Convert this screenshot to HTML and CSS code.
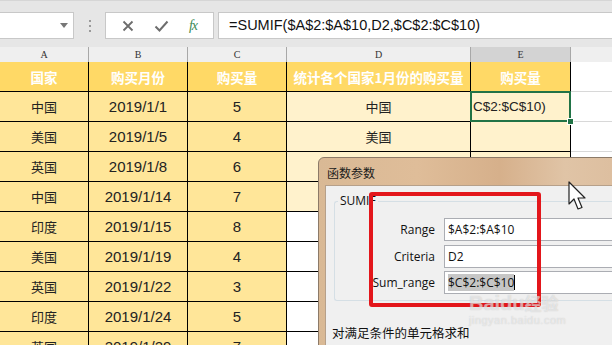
FILE: index.html
```html
<!DOCTYPE html>
<html lang="zh-CN">
<head>
    <meta charset="UTF-8">
    <meta name="viewport" content="width=device-width, initial-scale=1.0">
    <title>SUMIF 函数参数</title>
    <link rel="stylesheet" href="styles.css">
</head>
<body>
<div class="page">
    <!-- 编辑栏 -->
    <div class="toolbar">
        <div class="namebox">
            <svg width="8" height="5" viewBox="0 0 8 5"><path d="M0 0H8L4 5Z" fill="#777"/></svg>
        </div>
        <div class="grip"><i></i><i></i><i></i></div>
        <div class="btnbox">
            <svg width="12" height="12" viewBox="0 0 12 12"><path d="M1.5 1.5L10.5 10.5M10.5 1.5L1.5 10.5" stroke="#6d6d6d" stroke-width="1.8"/></svg>
            <svg width="15" height="12" viewBox="0 0 15 12"><path d="M1.5 6.5L5.5 10.5L13.5 1.5" stroke="#6d6d6d" stroke-width="2" fill="none"/></svg>
            <span class="fx">fx</span>
        </div>
        <div class="formula">=SUMIF($A$2:$A$10,D2,$C$2:$C$10)</div>
    </div>

    <!-- 工作表 -->
    <div class="sheet">
        <div class="colheads">
            <div>A</div><div>B</div><div>C</div><div>D</div><div class="sel">E</div><div class="rest"></div>
        </div>
        <div class="row head">
            <div class="cell">国家</div>
            <div class="cell">购买月份</div>
            <div class="cell">购买量</div>
            <div class="cell">统计各个国家1月份的购买量</div>
            <div class="cell">购买量</div>
            <div class="cell grid"></div>
        </div>
        <div class="row">
            <div class="cell cn">中国</div><div class="cell num">2019/1/1</div><div class="cell num">5</div>
            <div class="cell cn pale">中国</div><div class="cell pale active">C$2:$C$10)</div><div class="cell grid"></div>
        </div>
        <div class="row">
            <div class="cell cn">美国</div><div class="cell num">2019/1/5</div><div class="cell num">4</div>
            <div class="cell cn pale">美国</div><div class="cell pale"></div><div class="cell grid"></div>
        </div>
        <div class="row">
            <div class="cell cn">英国</div><div class="cell num">2019/1/8</div><div class="cell num">6</div>
            <div class="cell cn pale">英国</div><div class="cell pale"></div><div class="cell grid"></div>
        </div>
        <div class="row">
            <div class="cell cn">中国</div><div class="cell num">2019/1/14</div><div class="cell num">7</div>
            <div class="cell cn pale">印度</div><div class="cell pale"></div><div class="cell grid"></div>
        </div>
        <div class="row">
            <div class="cell cn">印度</div><div class="cell num">2019/1/15</div><div class="cell num">8</div>
            <div class="cell blank"></div><div class="cell blank"></div><div class="cell grid"></div>
        </div>
        <div class="row">
            <div class="cell cn">美国</div><div class="cell num">2019/1/19</div><div class="cell num">4</div>
            <div class="cell blank"></div><div class="cell blank"></div><div class="cell grid"></div>
        </div>
        <div class="row">
            <div class="cell cn">英国</div><div class="cell num">2019/1/22</div><div class="cell num">3</div>
            <div class="cell blank"></div><div class="cell blank"></div><div class="cell grid"></div>
        </div>
        <div class="row">
            <div class="cell cn">印度</div><div class="cell num">2019/1/24</div><div class="cell num">5</div>
            <div class="cell blank"></div><div class="cell blank"></div><div class="cell grid"></div>
        </div>
        <div class="row">
            <div class="cell cn">英国</div><div class="cell num">2019/1/29</div><div class="cell num">7</div>
            <div class="cell blank"></div><div class="cell blank"></div><div class="cell grid"></div>
        </div>
    </div>

    <!-- 函数参数对话框 -->
    <div class="dialog">
        <div class="titlebar">函数参数</div>
        <div class="client">
            <div class="group">
                <span class="legend">SUMIF</span>
                <div class="fields">
                    <label>Range</label><div class="input">$A$2:$A$10</div>
                    <label>Criteria</label><div class="input">D2</div>
                    <label>Sum_range</label><div class="input"><span class="selected">$C$2:$C$10</span><span class="caret"></span></div>
                </div>
            </div>
            <p class="desc">对满足条件的单元格求和</p>
        </div>
    </div>

    <div class="mark"></div>

    <div class="watermark">
        <div class="wm-big">Baidu<span>经验</span></div>
        <div class="wm-small">jingyan.baidu.com</div>
    </div>

    <svg class="cursor" width="20" height="30" viewBox="0 0 20 30">
        <path d="M1 1V23L6 18L10 28L14 26.5L10 17H17Z" fill="#fff" stroke="#222" stroke-width="1.2" stroke-linejoin="round"/>
    </svg>
</div>
</body>
</html>
```

FILE: styles.css
```css
body {
    margin: 0;
    font-family: "Liberation Sans", Arial, sans-serif;
    background: #fff;
}
.page {
    position: relative;
    width: 612px;
    height: 345px;
    overflow: hidden;
}

/* 编辑栏 */
.toolbar {
    height: 47px;
    box-sizing: border-box;
    padding-top: 11px;
    background: #e6e6e6;
    border-top: 1px solid #d6d6d6;
    display: flex;
    align-items: flex-start;
}
.namebox {
    width: 74px;
    height: 27px;
    box-sizing: border-box;
    background: #fff;
    border: 1px solid #c8c8c8;
    border-left: none;
    display: flex;
    align-items: center;
    justify-content: flex-end;
    padding-right: 5px;
}
.grip {
    width: 31px;
    height: 27px;
    display: flex;
    flex-direction: column;
    align-items: center;
    justify-content: center;
    gap: 3px;
}
.grip i {
    width: 2px;
    height: 2px;
    background: #9a9a9a;
}
.btnbox {
    width: 109px;
    height: 27px;
    box-sizing: border-box;
    background: #fff;
    border: 1px solid #c8c8c8;
    display: flex;
    align-items: center;
    justify-content: space-around;
    padding: 0 6px;
}
.fx {
    font-family: "Liberation Serif", serif;
    font-style: italic;
    font-size: 14px;
    color: #3b8a55;
    letter-spacing: -1px;
}
.formula {
    flex: 1;
    margin-left: 4px;
    height: 27px;
    box-sizing: border-box;
    background: #fff;
    border: 1px solid #c8c8c8;
    border-right: none;
    padding-left: 10px;
    font-size: 14.5px;
    line-height: 25px;
    color: #111;
    white-space: nowrap;
}

/* 工作表 */
.colheads,
.row {
    display: grid;
    grid-template-columns: 89px 99px 99px 184px 100px 1fr;
}
.colheads {
    height: 15px;
    background: #efefef;
    font-family: "Liberation Serif", serif;
    font-size: 10px;
    color: #333;
}
.colheads div {
    box-sizing: border-box;
    border-right: 1px solid #a8a8a8;
    border-bottom: 1px solid #b8b8b8;
    text-align: center;
    line-height: 15px;
}
.colheads .sel {
    background: #d3d3d3;
    border-bottom: 2px solid #217346;
}
.colheads .rest {
    border-right: none;
}
.row {
    height: 30px;
}
.cell {
    box-sizing: border-box;
    border-right: 1px solid #000;
    border-bottom: 1px solid #000;
    background: #ffe699;
    display: flex;
    align-items: center;
    justify-content: center;
    font-size: 15px;
    color: #222;
    white-space: nowrap;
}
.cn {
    font-family: "Noto Sans CJK SC", sans-serif;
    font-size: 13px;
}
.head .cell {
    background: #ffd966;
    color: #fff;
    font-family: "Noto Sans CJK SC", sans-serif;
    font-weight: bold;
    font-size: 13.5px;
}
.head .cell.grid {
    background: #fff;
}
.cell.pale {
    background: #fff2cc;
}
.cell.blank {
    background: #fff;
}
.cell.grid {
    background: #fff;
    border-right: none;
    border-bottom: 1px solid #d8d8d8;
}
.cell.active {
    position: relative;
    justify-content: flex-start;
    padding-left: 3px;
    font-size: 13.5px;
    box-shadow: inset 0 0 0 2px #217346;
    margin: -1px 0 0 -1px;
    width: 101px;
    height: 31px;
    border: none;
}
.cell.active::after {
    content: "";
    position: absolute;
    right: -3px;
    bottom: -3px;
    width: 5px;
    height: 5px;
    background: #217346;
    border: 1px solid #fff;
}

/* 对话框 */
.dialog {
    position: absolute;
    left: 318px;
    top: 157px;
    width: 330px;
    height: 200px;
    border-radius: 6px 0 0 0;
    background: linear-gradient(90deg, #d9b995, #dfbd99 30%, #d6b08b 55%, #e0c4a6 75%, #dbbb9b);
    border: 1px solid #8c7a68;
    box-sizing: border-box;
    padding-left: 6px;
}
.titlebar {
    height: 27px;
    padding-left: 2px;
    font-family: "Noto Sans CJK SC", sans-serif;
    font-size: 12px;
    line-height: 29px;
    color: #1a1a1a;
}
.client {
    background: #f0f0f0;
    height: 100%;
    border-top: 1px solid #b6a08a;
    border-left: 1px solid #b6a08a;
    padding: 15px 0 0 8px;
    box-sizing: border-box;
}
.group {
    position: relative;
    height: 100px;
    box-sizing: border-box;
    border: 1px solid #d5dfe5;
    border-right: none;
    border-radius: 3px 0 0 3px;
    font-family: "Open Sans", sans-serif;
    font-size: 12px;
    color: #111;
}
.legend {
    position: absolute;
    left: 3px;
    top: -9px;
    padding: 0 2px;
    background: #f0f0f0;
    line-height: 16px;
}
.fields {
    display: grid;
    grid-template-columns: 100px 1fr;
    grid-auto-rows: 23px;
    column-gap: 9px;
    row-gap: 3.5px;
    padding-top: 16px;
}
.fields label {
    text-align: right;
    line-height: 23px;
}
.input {
    background: #fff;
    border: 1px solid #abadb3;
    border-right: none;
    padding-left: 3px;
    line-height: 21px;
    display: flex;
    align-items: center;
}
.selected {
    background: #c6c6c6;
    line-height: 17px;
}
.caret {
    width: 1px;
    height: 15px;
    background: #000;
}
.desc {
    margin: 22px 0 0 -2px;
    font-family: "Noto Sans CJK SC", sans-serif;
    font-size: 12.5px;
    color: #111;
}

/* 红框标注 */
.mark {
    position: absolute;
    left: 369px;
    top: 192px;
    width: 172px;
    height: 115px;
    box-sizing: border-box;
    border: 4px solid #e3161b;
    border-radius: 3px;
}

/* 水印 */
.watermark {
    position: absolute;
    left: 469px;
    top: 292px;
    color: rgba(255, 255, 255, 0.5);
    text-shadow: 0 0 1px rgba(140, 140, 140, 0.45);
}
.wm-big {
    font-size: 20px;
    font-weight: bold;
    line-height: 22px;
}
.wm-big span {
    font-family: "Noto Sans CJK SC", sans-serif;
    font-size: 17px;
}
.wm-small {
    font-size: 11px;
    letter-spacing: 0.5px;
}

.cursor {
    position: absolute;
    left: 568px;
    top: 181px;
}
```
